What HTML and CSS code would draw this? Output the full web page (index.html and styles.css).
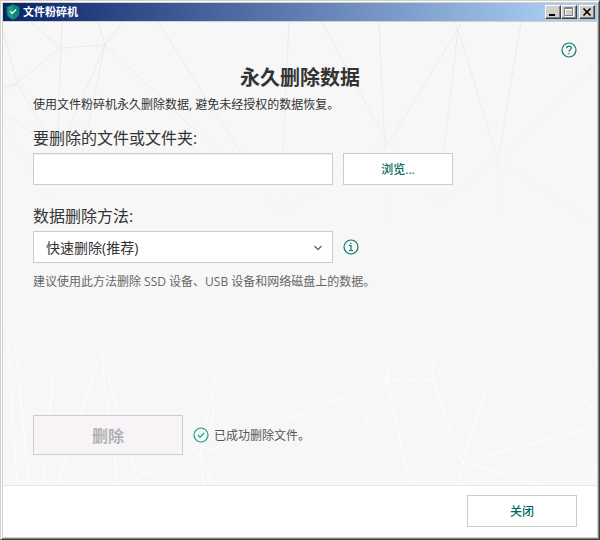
FILE: index.html
```
<!DOCTYPE html>
<html lang="zh-CN">
<head>
    <meta charset="utf-8">
    <title>文件粉碎机</title>
    <link rel="stylesheet" href="styles.css">
</head>
<body>
<div class="window">
    <div class="titlebar">
        <svg class="logo" viewBox="0 0 14 16" width="14" height="16">
            <path d="M7 0.5 L13 3 V9 C13 12.2 10.5 14.3 7 15.5 C3.500 14.3 1 12.200 1 9 V3 Z" fill="#159c86" stroke="#0f6b62"/>
            <path d="M7 1 L12.500 3.300 V9 C12.500 12 10 14 7 15 Z" fill="#0f8574"/>
            <path d="M4.200 7.300 L6.300 9.400 L10 5.500" fill="none" stroke="#fff" stroke-width="1.300"/>
        </svg>
        <span class="caption">文件粉碎机</span>
        <button class="win-btn" aria-label="最小化">
            <svg viewBox="0 0 14 12" width="14" height="12"><path d="M3 8h6v2H3z"/></svg>
        </button>
        <button class="win-btn" aria-label="最大化">
            <svg viewBox="0 0 14 12" width="14" height="12" fill="none">
                <path d="M3.500 2.500h8v8h-8zM3 3.500h9" stroke="#fff"/>
                <path d="M2.500 1.500h8v8h-8zM2 2.500h9" stroke="#808080"/>
            </svg>
        </button>
        <button class="win-btn win-close" aria-label="关闭窗口">
            <svg viewBox="0 0 14 12" width="14" height="12"><path d="M3.500 2.500l7 7M10.500 2.500l-7 7" stroke="#000" stroke-width="1.700"/></svg>
        </button>
    </div>

    <div class="content">
        <svg class="mesh" viewBox="3 22 594 463" preserveAspectRatio="none" aria-hidden="true">
            <defs>
                <linearGradient id="fadeTop" gradientUnits="userSpaceOnUse" x1="0" y1="22" x2="0" y2="225">
                    <stop offset="0" stop-color="#ebe8e9"/>
                    <stop offset="0.500" stop-color="#efecee"/>
                    <stop offset="1" stop-color="#f7f7f7"/>
                </linearGradient>
                <linearGradient id="fadeBottom" gradientUnits="userSpaceOnUse" x1="0" y1="300" x2="0" y2="485">
                    <stop offset="0" stop-color="#f7f7f7"/>
                    <stop offset="0.500" stop-color="#fff"/>
                    <stop offset="1" stop-color="#fff"/>
                </linearGradient>
            </defs>
            <path stroke="url(#fadeTop)" fill="none" d="M31 22L60 48L105 45L98 22M123 22L105 45L60 150M105 45L75 190M105 45L240 173M62 22L58 130M60 48L17 83L3 95M3 30L17 83L3 88M17 83L55 148M3 113L55 148M3 125L50 195M158 22L280 215M289 22L280 215M322 22L388 144M379 22L388 220M454 22L458 29L462 22M458 29L388 144L280 215M458 29L438 202M458 29L498 161L500 210M521 22L498 161L438 202L388 144M597 63L498 161L590 222"/>
            <path stroke="url(#fadeBottom)" stroke-dasharray="4 1" fill="none" d="M7 330L17 485M14 330L29 485M57 330L43 485M101 352L57 485M101 352L118 485M101 352L137 478L200 454L387 380L432 380L463 462L387 380L332 485M101 352L185 440L200 454L213 485M225 330L200 454L204 485M240 330L200 454M137 478L165 450M137 478L140 485M355 325L387 380L410 485M387 330V380M400 325L387 380M433 330V380L500 325M500 340L463 462L597 426M463 462L540 485M463 462L477 485M463 462L458 485M510 325L597 413M592 330L597 368M597 465L592 485"/>
        </svg>

        <div class="help-row">
            <button class="icon-btn" aria-label="帮助">
                <svg viewBox="0 0 16 16" width="16" height="16" fill="none" stroke="#0b7a68" stroke-width="1.200">
                    <circle cx="8" cy="8" r="7"/>
                    <path d="M5.800 6.300C5.800 4.900 6.700 4.100 8 4.100S10.300 4.900 10.300 6.100C10.300 7.700 8 7.800 8 9.700M8 11v1.300"/>
                </svg>
            </button>
        </div>

        <form class="form">
            <h1>永久删除数据</h1>
            <p class="intro">使用文件粉碎机永久删除数据, 避免未经授权的数据恢复。</p>

            <label class="field-label" for="path">要删除的文件或文件夹:</label>
            <div class="field-row">
                <input class="field" id="path" type="text">
                <button class="btn" type="button">浏览...</button>
            </div>

            <label class="field-label" for="method">数据删除方法:</label>
            <div class="field-row">
                <div class="select-wrap">
                    <select class="field" id="method">
                        <option>快速删除(推荐)</option>
                    </select>
                    <svg class="chevron" viewBox="0 0 10 6" width="10" height="6"><path d="M1.500 1L5 4.500L8.500 1" fill="none" stroke="#666" stroke-width="1.300"/></svg>
                </div>
                <button class="icon-btn" type="button" aria-label="信息">
                    <svg viewBox="0 0 16 16" width="16" height="16" fill="none" stroke="#0b7a68" stroke-width="1.200">
                        <circle cx="8" cy="8" r="7"/>
                        <path d="M6 6.500H8V11.500M6 11.500H10M7 4.500H8.500"/>
                    </svg>
                </button>
            </div>
            <p class="hint">建议使用此方法删除 SSD 设备、USB 设备和网络磁盘上的数据。</p>

            <div class="action-row">
                <button class="btn btn-delete" type="button" disabled>删除</button>
                <svg viewBox="0 0 16 16" width="16" height="16" fill="none" stroke="#1fa083" stroke-width="1.200">
                    <circle cx="8" cy="8" r="7"/>
                    <path d="M4.800 8L7 10.200L11.200 6"/>
                </svg>
                <span class="status">已成功删除文件。</span>
            </div>
        </form>
    </div>

    <div class="footer">
        <button class="btn">关闭</button>
    </div>
</div>
</body>
</html>
```
FILE: styles.css
```
* {
    box-sizing: border-box;
    margin: 0;
    padding: 0;
}

body, button, input, select {
    font-family: "Open Sans", "Noto Sans CJK SC", sans-serif;
    font-size: 12px;
}

body {
    color: #333;
}

/* window frame */
.window {
    display: flex;
    flex-direction: column;
    min-height: 100vh;
    padding: 1px;
    background: #d4d0c8;
    border: 1px solid;
    border-color: #d4d0c8 #404040 #404040 #d4d0c8;
    box-shadow: inset 1px 1px #fff, inset -1px -1px #808080;
}

.titlebar {
    display: flex;
    align-items: center;
    height: 20px;
    margin: 0 1px;
    padding: 0 2px 0 3px;
    border: 1px solid #d4d0c8;
    border-width: 1px 0;
    background: linear-gradient(to right, #0a246a, #a6caf0 92%);
}

.caption {
    flex: 1;
    margin-left: 3px;
    color: #fff;
    font-size: 11px;
    font-weight: bold;
    line-height: 18px;
}

.win-btn {
    width: 16px;
    height: 14px;
    background: #d4d0c8;
    border: 1px solid;
    border-color: #fff #404040 #404040 #fff;
    box-shadow: inset -1px -1px #808080;
}

.win-btn svg {
    display: block;
}

.win-close {
    margin-left: 2px;
}

/* content */
.content {
    position: relative;
    flex: 1;
    display: flex;
    flex-direction: column;
    margin: 0 1px;
    padding: 20px 20px 30px;
    background: #f7f7f7;
}

.mesh {
    position: absolute;
    top: 0;
    left: 0;
    width: 100%;
    height: 100%;
}

.help-row {
    position: relative;
    display: flex;
    justify-content: flex-end;
}

.icon-btn {
    height: 16px;
    background: none;
    border: 0;
}

.icon-btn svg {
    display: block;
}

.form {
    position: relative;
    flex: 1;
    display: flex;
    flex-direction: column;
    margin: 4px 10px 0;
}

h1 {
    font-size: 20px;
    line-height: 32px;
    text-align: center;
}

.intro {
    margin-bottom: 10px;
    line-height: 22px;
}

.field-label {
    margin-bottom: 3px;
    font-size: 16px;
    line-height: 24px;
}

.field-row {
    display: flex;
    align-items: center;
    gap: 10px;
    margin-bottom: 19px;
}

.field {
    width: 300px;
    height: 32px;
    padding: 0 12px;
    color: #333;
    font-size: 14px;
    background: #fff;
    border: 1px solid #ccc;
    border-radius: 0;
    appearance: none;
}

input.field {
    box-shadow: inset 0 1px #eee;
}

.select-wrap {
    position: relative;
}

.select-wrap .field {
    display: block;
}

.chevron {
    position: absolute;
    top: 14px;
    right: 10px;
    pointer-events: none;
}

.hint {
    margin-top: -11px;
    color: #666;
    line-height: 22px;
}

.btn {
    width: 110px;
    height: 32px;
    color: #006d5c;
    font-weight: 500;
    background: #fff;
    border: 1px solid #ccc;
}

.action-row {
    display: flex;
    align-items: center;
    gap: 10px;
    margin-top: auto;
}

.btn-delete {
    width: 150px;
    height: 40px;
    color: #b3b3b3;
    font-size: 16px;
    font-weight: bold;
    background: #f7f3f7;
}

.status {
    margin-left: -5px;
    color: #555;
}

.footer {
    display: flex;
    justify-content: flex-end;
    margin: 0 1px 1px;
    padding: 9px 20px 10px;
    background: #fff;
    border-top: 1px solid #e8e8e8;
}
```
